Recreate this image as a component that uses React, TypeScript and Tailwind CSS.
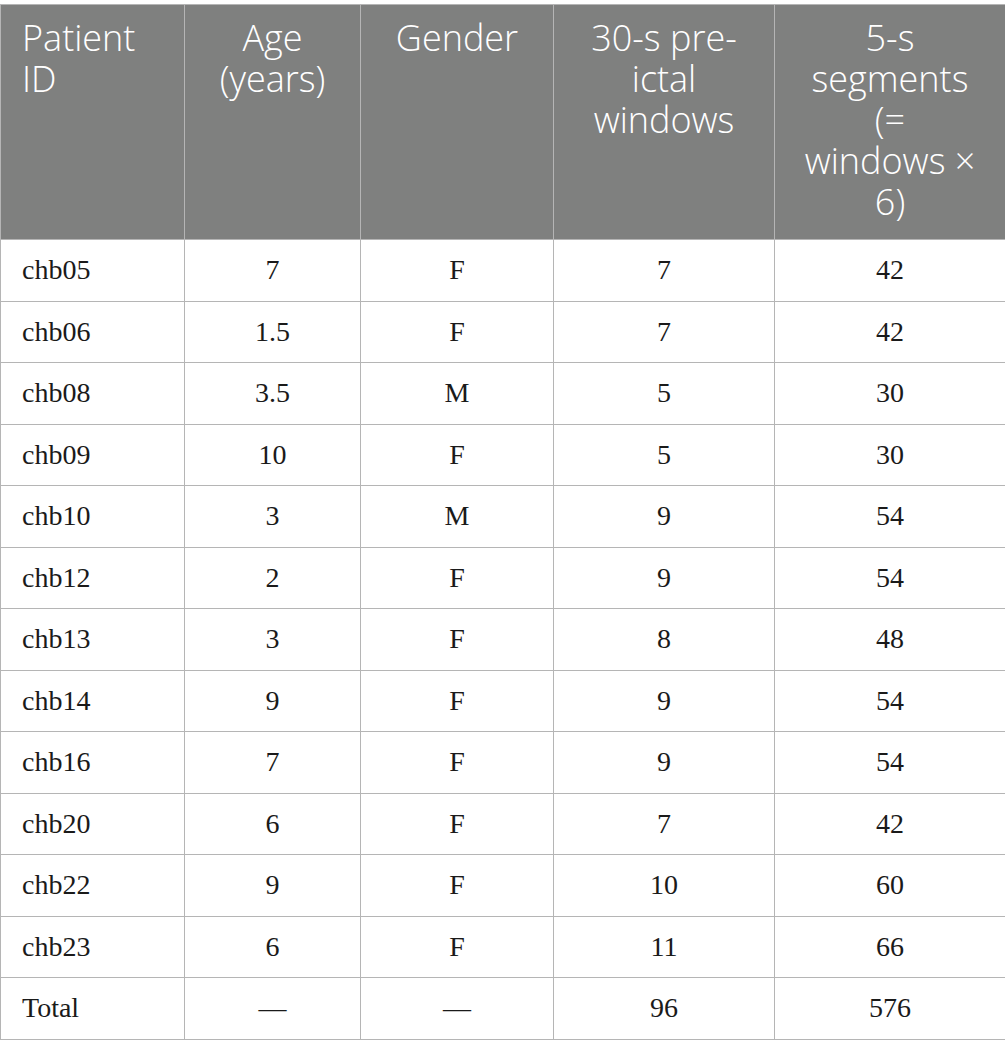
import React from "react";

const rows: [string, string, string, string, string][] = [
  ["chb05", "7", "F", "7", "42"],
  ["chb06", "1.5", "F", "7", "42"],
  ["chb08", "3.5", "M", "5", "30"],
  ["chb09", "10", "F", "5", "30"],
  ["chb10", "3", "M", "9", "54"],
  ["chb12", "2", "F", "9", "54"],
  ["chb13", "3", "F", "8", "48"],
  ["chb14", "9", "F", "9", "54"],
  ["chb16", "7", "F", "9", "54"],
  ["chb20", "6", "F", "7", "42"],
  ["chb22", "9", "F", "10", "60"],
  ["chb23", "6", "F", "11", "66"],
  ["Total", "—", "—", "96", "576"],
];

export default function App() {
  return (
    <div className="bg-white w-[1005px] h-[1056px] pt-[4px]">
      <table className="border-collapse table-fixed w-[1005px]">
        <colgroup>
          <col className="w-[184px]" />
          <col className="w-[176px]" />
          <col className="w-[193px]" />
          <col className="w-[221px]" />
          <col className="w-[231px]" />
        </colgroup>
        <thead>
          <tr className="h-[235px] bg-[#7f807f] text-white font-['Open_Sans',sans-serif] text-[36px] leading-[41px]">
            <th className="border border-[#b5b5b5] align-top text-left font-light pl-[21px] pr-2 pt-[12px]">Patient<br />ID</th>
            <th className="border border-[#b5b5b5] align-top text-center font-light px-2 pt-[12px]">Age<br />(years)</th>
            <th className="border border-[#b5b5b5] align-top text-center font-light px-2 pt-[12px]">Gender</th>
            <th className="border border-[#b5b5b5] align-top text-center font-light px-2 pt-[12px]">30-s pre-<br />ictal<br />windows</th>
            <th className="border border-[#b5b5b5] align-top text-center font-light px-2 pt-[12px]">5-s<br />segments<br />(=<br />windows ×<br />6)</th>
          </tr>
        </thead>
        <tbody className="font-['Liberation_Serif',serif] text-[28px] text-[#1a1a1a]">
          {rows.map((r) => (
            <tr key={r[0]} className="h-[61.5px]">
              <td className="border border-[#b5b5b5] pl-[21px] align-middle">{r[0]}</td>
              <td className="border border-[#b5b5b5] text-center align-middle">{r[1]}</td>
              <td className="border border-[#b5b5b5] text-center align-middle">{r[2]}</td>
              <td className="border border-[#b5b5b5] text-center align-middle">{r[3]}</td>
              <td className="border border-[#b5b5b5] text-center align-middle">{r[4]}</td>
            </tr>
          ))}
        </tbody>
      </table>
    </div>
  );
}
